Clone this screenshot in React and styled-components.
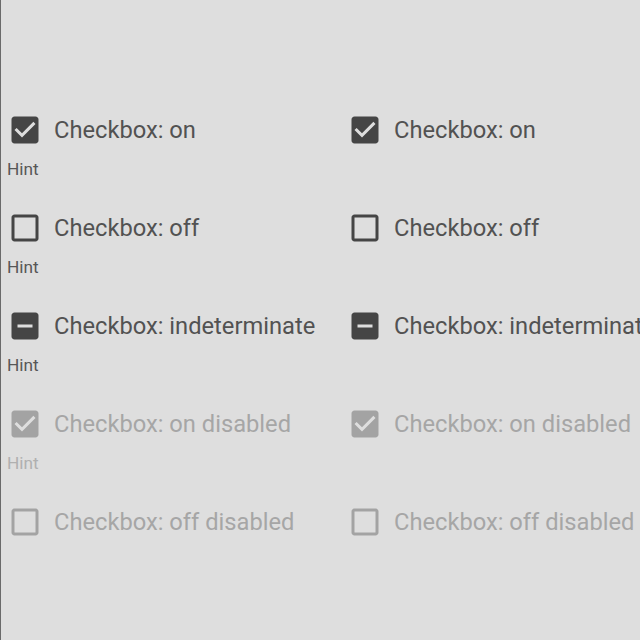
import React from 'react'
import styled, { createGlobalStyle } from 'styled-components'

const GlobalStyle = createGlobalStyle`
  html, body {
    margin: 0;
    padding: 0;
    background: #dedede;
  }
  body {
    font-family: Roboto, "Liberation Sans", sans-serif;
    border-left: 1px solid #6a6a6a;
    min-height: 640px;
    box-sizing: border-box;
    overflow: hidden;
  }
`;

const Page = styled.div`
  display: flex;
  flex-direction: row;
  width: 700px;
  padding-top: 111px;
`;

const Column = styled.div`
  width: 340px;
  flex-shrink: 0;
  display: flex;
  flex-direction: column;
  padding-left: 6px;
  box-sizing: border-box;
`;

const Item = styled.div`
  height: 98px;
  display: flex;
  flex-direction: column;
`;

const Row = styled.div`
  display: flex;
  align-items: center;
  height: 37px;
  gap: 11px;
  white-space: nowrap;
`;

const Label = styled.span`
  font-size: 23.7px;
  color: ${props => props.disabled ? '#a6a6a6' : '#525252'};
`;

const Hint = styled.div`
  margin-top: 11px;
  font-size: 17.3px;
  line-height: 21px;
  color: ${props => props.disabled ? '#b0b0b0' : '#575757'};
`;

const Icon = styled.svg`
  width: 36px;
  height: 36px;
  flex-shrink: 0;
  fill: ${props => props.disabled ? '#a3a3a3' : '#454545'};
`;

const paths = {
  on: "M19 3H5c-1.11 0-2 .9-2 2v14c0 1.1.89 2 2 2h14c1.11 0 2-.9 2-2V5c0-1.1-.89-2-2-2zm-9 14l-5-5 1.41-1.41L10 14.17l7.59-7.59L19 8l-9 9z",
  off: "M19 5v14H5V5h14m0-2H5c-1.1 0-2 .9-2 2v14c0 1.1.9 2 2 2h14c1.1 0 2-.9 2-2V5c0-1.1-.9-2-2-2z",
  indeterminate: "M19 3H5c-1.1 0-2 .9-2 2v14c0 1.1.9 2 2 2h14c1.1 0 2-.9 2-2V5c0-1.1-.9-2-2-2zm-2 10H7v-2h10v2z"
};

const items = [
  { state: 'on', label: 'Checkbox: on' },
  { state: 'off', label: 'Checkbox: off' },
  { state: 'indeterminate', label: 'Checkbox: indeterminate' },
  { state: 'on', label: 'Checkbox: on disabled', disabled: true },
  { state: 'off', label: 'Checkbox: off disabled', disabled: true }
];

function Checkbox({ state, disabled }) {
  return (
    <Icon viewBox="0 0 24 24" disabled={disabled}>
      <path d={paths[state]} />
    </Icon>
  )
}

class App extends React.Component {
  renderColumn(withHints) {
    return items.map((item, i) => (
      <Item key={i}>
        <Row>
          <Checkbox state={item.state} disabled={item.disabled} />
          <Label disabled={item.disabled}>{item.label}</Label>
        </Row>
        {withHints && i < 4 && <Hint disabled={item.disabled}>Hint</Hint>}
      </Item>
    ));
  }

  render() {
    return (
      <>
        <GlobalStyle />
        <Page>
          <Column>{this.renderColumn(true)}</Column>
          <Column>{this.renderColumn(false)}</Column>
        </Page>
      </>
    )
  }
}

export default App
